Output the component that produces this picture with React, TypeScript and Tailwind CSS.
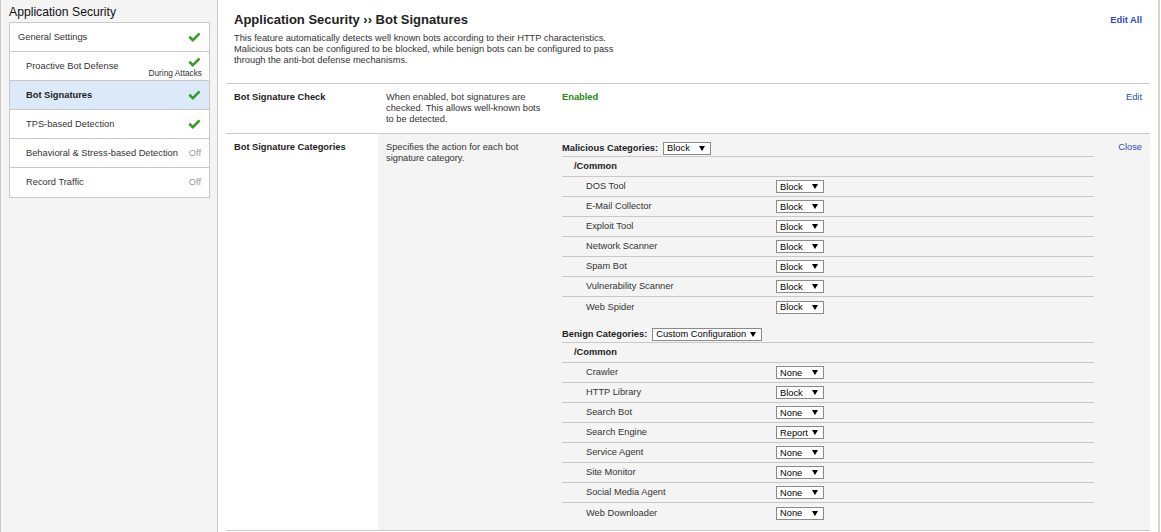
import React from "react";

function Check() {
  return (
    <svg width="13" height="10" viewBox="0 0 13 10" className="block">
      <path d="M1.3 4.8 L4.8 8.1 L11.6 1.4" fill="none" stroke="#3a9a2a" strokeWidth="2.6" />
    </svg>
  );
}

function Sel({ v }: { v: string }) {
  return (
    <span className="inline-flex h-[13px] min-w-[48px] items-center justify-between gap-[4px] border border-[#8a8a8a] bg-white pl-[3px] pr-[5px] text-[9.3px] font-normal leading-[11px] text-black">
      <span className="pt-[1px]">{v}</span>
      <svg width="6" height="5" viewBox="0 0 6 5" className="block">
        <path d="M0 0H6L3 5Z" fill="#000" />
      </svg>
    </span>
  );
}

type NavItem = { label: string; sub?: boolean; right: "check" | "off" | "during"; active?: boolean };

const nav: NavItem[] = [
  { label: "General Settings", right: "check" },
  { label: "Proactive Bot Defense", sub: true, right: "during" },
  { label: "Bot Signatures", sub: true, right: "check", active: true },
  { label: "TPS-based Detection", sub: true, right: "check" },
  { label: "Behavioral & Stress-based Detection", sub: true, right: "off" },
  { label: "Record Traffic", sub: true, right: "off" },
];

const malicious: [string, string][] = [
  ["DOS Tool", "Block"],
  ["E-Mail Collector", "Block"],
  ["Exploit Tool", "Block"],
  ["Network Scanner", "Block"],
  ["Spam Bot", "Block"],
  ["Vulnerability Scanner", "Block"],
  ["Web Spider", "Block"],
];

const benign: [string, string][] = [
  ["Crawler", "None"],
  ["HTTP Library", "Block"],
  ["Search Bot", "None"],
  ["Search Engine", "Report"],
  ["Service Agent", "None"],
  ["Site Monitor", "None"],
  ["Social Media Agent", "None"],
  ["Web Downloader", "None"],
];

function Group({ title, value, items, className }: { title: string; value: string; items: [string, string][]; className?: string }) {
  return (
    <div className={className}>
      <div className="flex h-[17px] items-center gap-[5px] border-b border-[#c8c8c8] font-bold text-[#222]">
        <span>{title}</span>
        <Sel v={value} />
      </div>
      <div className="flex h-[20px] items-center border-b border-[#c8c8c8] pl-[12px] font-bold text-[#222]">/Common</div>
      {items.map(([l, v], i) => (
        <div
          key={l}
          className={
            "flex h-[20px] items-center " + (i < items.length - 1 ? "border-b border-[#c8c8c8]" : "")
          }
        >
          <span className="w-[214px] pl-[24px] text-[#333]">{l}</span>
          <Sel v={v} />
        </div>
      ))}
    </div>
  );
}

export default function App() {
  return (
    <div className="flex h-[532px] w-[1161px] overflow-hidden bg-white font-['Liberation_Sans',Arial,sans-serif] text-[9.3px] leading-[11px] text-[#333]">
      <aside className="w-[218px] shrink-0 border-l border-r border-[#c8c8c8] bg-[#f4f4f4]">
        <div className="h-[22px] pl-[8px] pt-[5px] text-[12.2px] leading-[15px] text-[#111]">Application Security</div>
        <div className="ml-[8px] w-[201px] border border-[#c8c8c8] bg-white">
          {nav.map((n, i) => (
            <div
              key={n.label}
              className={
                "flex h-[29px] items-center justify-between pr-[8px] " +
                (i < nav.length - 1 ? "border-b border-[#c8c8c8] " : "h-[28px] ") +
                (n.sub ? "pl-[16px] " : "pl-[8px] ") +
                (n.active ? "bg-[#dce9f9] font-bold text-[#222]" : "text-[#333]")
              }
            >
              <span>{n.label}</span>
              {n.right === "check" && <Check />}
              {n.right === "off" && <span className="text-[#999]">Off</span>}
              {n.right === "during" && (
                <span className="-mr-[1px] flex flex-col items-end pt-[2px]">
                  <span className="mr-[1px]">
                    <Check />
                  </span>
                  <span className="mt-[1px] text-[8.3px] leading-[10px] text-[#333]">During Attacks</span>
                </span>
              )}
            </div>
          ))}
        </div>
      </aside>

      <main className="flex min-w-0 flex-1">
        <div className="ml-[8px] mr-[8px] w-[924px]">
          <div className="flex justify-between border-b border-[#c8c8c8] pb-[17px] pl-[8px] pr-[8px] pt-[12px]">
            <div>
              <h1 className="text-[13px] font-bold leading-[16px] text-[#222]">Application Security ›› Bot Signatures</h1>
              <p className="mt-[5px] text-[#333]">
                This feature automatically detects well known bots according to their HTTP characteristics.
                <br />
                Malicious bots can be configured to be blocked, while benign bots can be configured to pass
                <br />
                through the anti-bot defense mechanisms.
              </p>
            </div>
            <a className="mt-[3px] font-bold text-[#2f49c2]">Edit All</a>
          </div>

          <div className="flex border-b border-[#c8c8c8]">
            <div className="w-[152px] py-[8px] pl-[8px] font-bold text-[#222]">Bot Signature Check</div>
            <div className="w-[184px] px-[8px] py-[8px]">
              When enabled, bot signatures are
              <br />
              checked. This allows well-known bots
              <br />
              to be detected.
            </div>
            <div className="w-[532px] py-[8px] font-bold text-[#1f8a0a]">Enabled</div>
            <div className="flex-1 py-[8px] pr-[8px] text-right text-[#2f49c2]">Edit</div>
          </div>

          <div className="flex border-b border-[#c8c8c8]">
            <div className="w-[152px] pl-[8px] pt-[8px] font-bold text-[#222]">Bot Signature Categories</div>
            <div className="flex flex-1 bg-[#f4f4f4]">
              <div className="w-[184px] px-[8px] pt-[8px]">
                Specifies the action for each bot
                <br />
                signature category.
              </div>
              <div className="w-[532px] pb-[7px] pt-[6px]">
                <Group title="Malicious Categories:" value="Block" items={malicious} />
                <Group title="Benign Categories:" value="Custom Configuration" items={benign} className="mt-[9px]" />
              </div>
              <div className="flex-1 pr-[8px] pt-[8px] text-right text-[#2f49c2]">Close</div>
            </div>
          </div>
        </div>
        <div className="w-[3px] shrink-0 border-l-2 border-[#d8d3ce]" />
      </main>
    </div>
  );
}
